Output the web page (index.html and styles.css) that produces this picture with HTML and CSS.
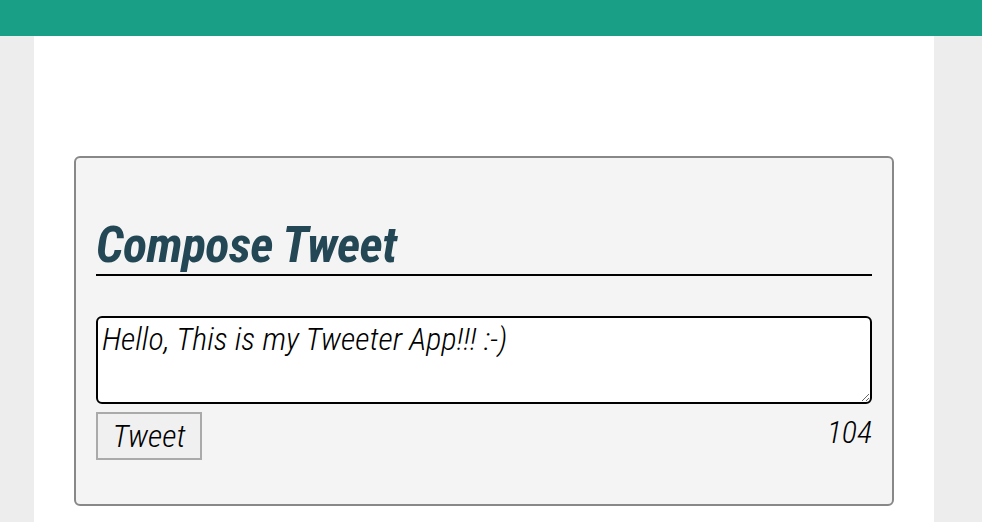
FILE: index.html
```html
<!DOCTYPE html>
<html lang="en">
<head>
<meta charset="utf-8">
<title>Tweeter</title>
<link rel="stylesheet" href="styles.css">
</head>
<body>
<header class="topbar"></header>
<main class="page">
  <section class="compose">
    <h2 class="compose-title">Compose Tweet</h2>
    <form class="compose-form">
      <textarea class="compose-text" name="text">Hello, This is my Tweeter App!!! :-)</textarea>
      <div class="compose-footer">
        <button type="button" class="tweet-btn">Tweet</button>
        <span class="counter">104</span>
      </div>
    </form>
  </section>
</main>
</body>
</html>
```

FILE: styles.css
```css
html, body {
  margin: 0;
  padding: 0;
  height: 100%;
}

body {
  background: #ededed;
  font-family: "Roboto Condensed", Roboto, "Liberation Sans Narrow", sans-serif;
  font-stretch: condensed;
  overflow: hidden;
}

.topbar {
  height: 36px;
  background: #1a9f87;
}

.page {
  width: 900px;
  margin-left: 34px;
  background: #ffffff;
  padding: 120px 40px 40px;
  box-sizing: border-box;
  min-height: calc(100% - 36px);
}

.compose {
  width: 820px;
  box-sizing: border-box;
  background: #f4f4f4;
  border: 2px solid #888888;
  border-radius: 6px;
  padding: 20px 20px 44px;
}

.compose-title {
  margin: 38px 0 0;
  font-size: 50px;
  line-height: 58px;
  letter-spacing: -0.6px;
  font-weight: 700;
  font-style: italic;
  color: #234755;
  border-bottom: 2px solid #000000;
}

.compose-form {
  margin-top: 40px;
}

.compose-text {
  display: block;
  width: 100%;
  height: 88px;
  box-sizing: border-box;
  border: 2px solid #000000;
  border-radius: 6px;
  background: #ffffff;
  padding: 2px 4px;
  font-family: inherit;
  font-stretch: condensed;
  font-size: 32px;
  line-height: 38px;
  font-weight: 300;
  font-style: italic;
  color: #000000;
  resize: vertical;
  outline: none;
}

.compose-footer {
  display: flex;
  justify-content: space-between;
  align-items: flex-start;
  margin-top: 8px;
}

.tweet-btn {
  width: 106px;
  height: 48px;
  box-sizing: border-box;
  border: 2px solid #aaaaaa;
  background: #f0f0f0;
  padding: 0;
  font-family: inherit;
  font-stretch: condensed;
  font-size: 32px;
  font-weight: 300;
  font-style: italic;
  color: #000000;
}

.counter {
  font-size: 32px;
  font-weight: 300;
  font-style: italic;
  line-height: 38px;
  margin-top: 1px;
}
```
